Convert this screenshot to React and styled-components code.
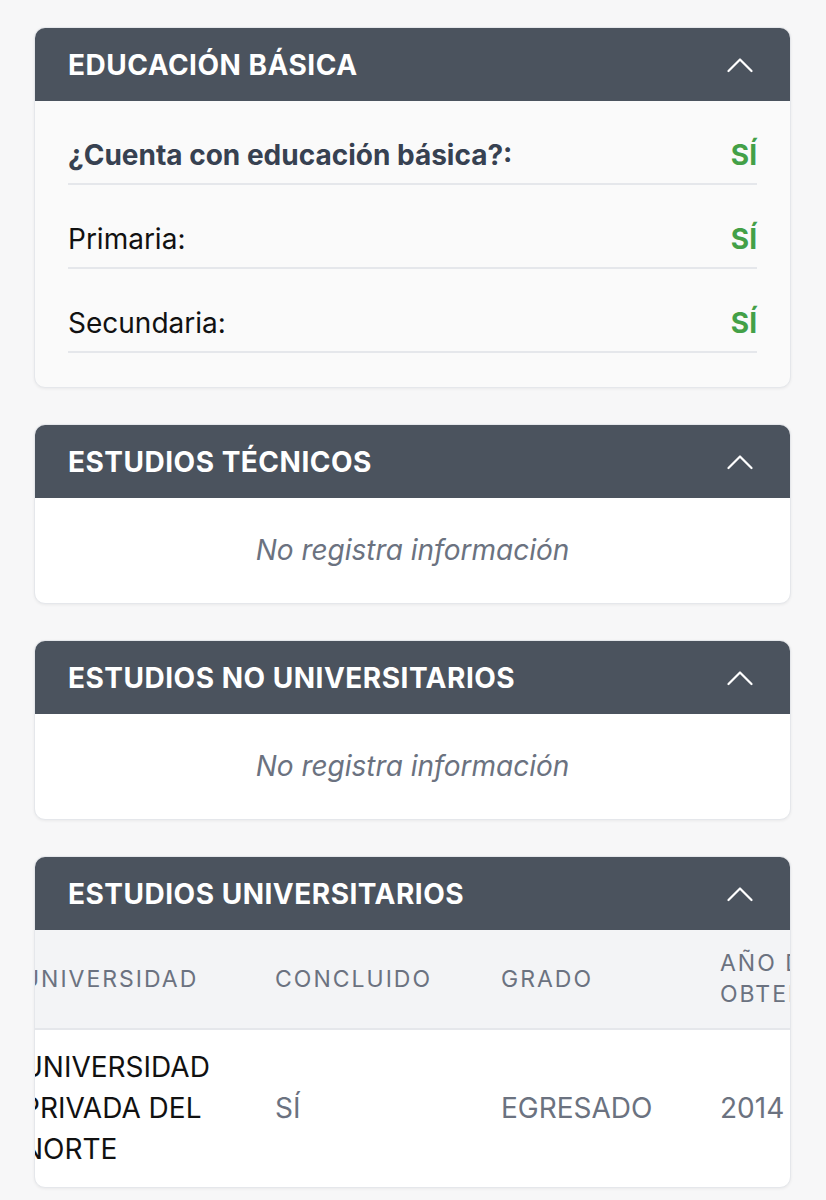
import { useLayoutEffect, useRef } from "react";
import styled, { createGlobalStyle } from "styled-components";

const GlobalStyle = createGlobalStyle`
  html, body {
    margin: 0;
    padding: 0;
    background: #f7f7f8;
  }
  body {
    font-family: "Inter", "Liberation Sans", sans-serif;
  }
`;

const Page = styled.div`
  display: flex;
  flex-direction: column;
  gap: 36px;
  padding: 27px 35px 40px 34px;
`;

const Card = styled.section`
  background: ${(p) => (p.$tinted ? "#fafafa" : "#ffffff")};
  border: 1px solid #e5e7eb;
  border-radius: 11px;
  box-shadow: 0 1px 3px rgba(0, 0, 0, 0.06);
  overflow: hidden;
`;

const Header = styled.header`
  display: flex;
  align-items: center;
  justify-content: space-between;
  height: 73px;
  padding: 0 37px 0 33px;
  background: #4b535e;
  color: #ffffff;
`;

const Title = styled.h2`
  margin: 0;
  font-size: 28px;
  font-weight: 700;
  letter-spacing: 0.5px;
  text-transform: uppercase;
`;

const Body = styled.div`
  padding: 0 33px 34px 33px;
`;

const Row = styled.div`
  display: flex;
  justify-content: space-between;
  align-items: center;
  padding: 36px 0 10px;
  line-height: 36px;
  font-size: 28px;
  border-bottom: 2px solid #e5e7eb;
`;

const Label = styled.span`
  color: ${(p) => (p.$strong ? "#374151" : "#111111")};
  font-weight: ${(p) => (p.$strong ? 700 : 400)};
`;

const Yes = styled.span`
  color: #43a047;
  font-weight: 700;
`;

const Empty = styled.p`
  margin: 0;
  padding: 35px 0;
  text-align: center;
  font-size: 28px;
  line-height: 35px;
  font-style: italic;
  color: #6b7280;
`;

const Scroller = styled.div`
  overflow-x: auto;
  scrollbar-width: none;
  &::-webkit-scrollbar {
    display: none;
  }
`;

const Table = styled.table`
  border-collapse: collapse;
  table-layout: fixed;
  width: 928px;
`;

const Th = styled.th`
  box-sizing: border-box;
  width: ${(p) => p.$w}px;
  padding: 18px 24px;
  background: #f3f4f6;
  border-bottom: 2px solid #e5e7eb;
  text-align: left;
  vertical-align: middle;
  font-size: 23px;
  line-height: 31px;
  font-weight: 400;
  letter-spacing: 2px;
  color: #6b7280;
  text-transform: uppercase;
`;

const Td = styled.td`
  padding: 17px 24px;
  vertical-align: middle;
  font-size: 28px;
  line-height: 41px;
  color: ${(p) => (p.$main ? "#111111" : "#6b7280")};
  text-transform: uppercase;
`;

function ChevronUp() {
  return (
    <svg width="26" height="16" viewBox="0 0 26 16" fill="none">
      <polyline
        points="1.5,14 13,2.5 24.5,14"
        stroke="#ffffff"
        strokeWidth="2.2"
        strokeLinecap="round"
        strokeLinejoin="round"
      />
    </svg>
  );
}

function Section({ title, tinted, children }) {
  return (
    <Card $tinted={tinted}>
      <Header>
        <Title>{title}</Title>
        <ChevronUp />
      </Header>
      {children}
    </Card>
  );
}

const columns = [
  { label: "Universidad", w: 253 },
  { label: "Concluido", w: 226 },
  { label: "Grado", w: 219 },
  { label: "Año de obtención", w: 230 },
];

function UniversityTable() {
  const ref = useRef(null);

  // the list is shown slid a little to the right, as in the app
  useLayoutEffect(() => {
    if (ref.current) ref.current.scrollLeft = 37;
  }, []);

  return (
    <Scroller ref={ref}>
      <Table>
        <thead>
          <tr>
            {columns.map((c) => (
              <Th key={c.label} $w={c.w}>
                {c.label}
              </Th>
            ))}
          </tr>
        </thead>
        <tbody>
          <tr>
            <Td $main>Universidad privada del norte</Td>
            <Td>Sí</Td>
            <Td>Egresado</Td>
            <Td>2014</Td>
          </tr>
        </tbody>
      </Table>
    </Scroller>
  );
}

export default function App() {
  return (
    <>
      <GlobalStyle />
      <Page>
        <Section title="Educación básica" tinted>
          <Body>
            <Row>
              <Label $strong>¿Cuenta con educación básica?:</Label>
              <Yes>SÍ</Yes>
            </Row>
            <Row>
              <Label>Primaria:</Label>
              <Yes>SÍ</Yes>
            </Row>
            <Row>
              <Label>Secundaria:</Label>
              <Yes>SÍ</Yes>
            </Row>
          </Body>
        </Section>

        <Section title="Estudios técnicos">
          <Empty>No registra información</Empty>
        </Section>

        <Section title="Estudios no universitarios">
          <Empty>No registra información</Empty>
        </Section>

        <Section title="Estudios universitarios">
          <UniversityTable />
        </Section>
      </Page>
    </>
  );
}
